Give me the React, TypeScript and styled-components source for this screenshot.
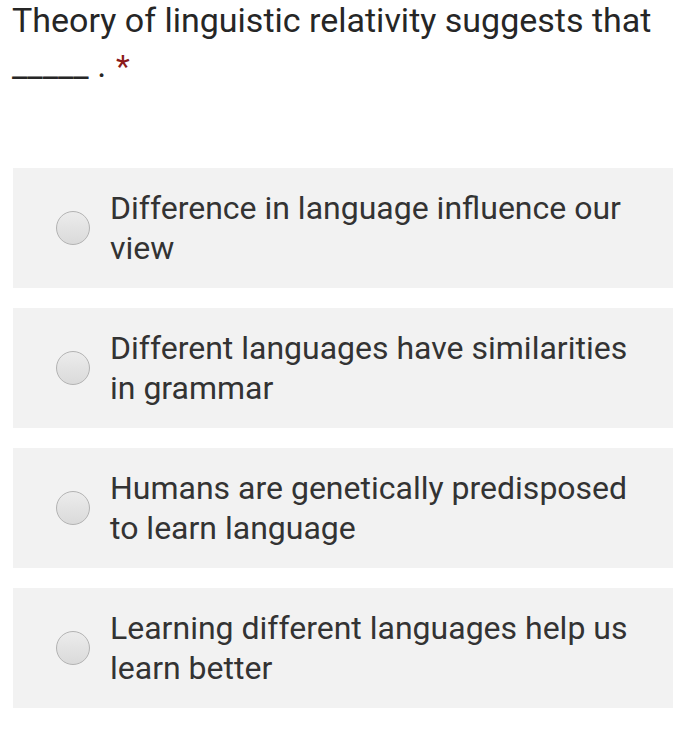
import React from "react";
import styled, { createGlobalStyle } from "styled-components";

const Global = createGlobalStyle`
  html, body { margin: 0; padding: 0; background: #ffffff; }
  body { font-family: Roboto, "Noto Sans", sans-serif; }
`;

const Page = styled.div`
  width: 693px;
  padding: 0 20px 0 12px;
  box-sizing: border-box;
`;

const Title = styled.div`
  font-size: 34px;
  line-height: 45px;
  color: #262626;
  margin-top: -2px;
  margin-bottom: 80px;
`;

const Required = styled.span`
  color: #8b1a1a;
  font-size: 32px;
  line-height: 0;
  margin-left: 10px;
  vertical-align: 0;
`;

const Options = styled.div`
  display: flex;
  flex-direction: column;
  gap: 20px;
  margin-left: 1px;
`;

const Option = styled.label`
  display: flex;
  align-items: center;
  min-height: 120px;
  background: #f2f2f2;
  box-sizing: border-box;
  padding: 0 28px 0 43px;
`;

const Radio = styled.span`
  flex: none;
  width: 34px;
  height: 34px;
  border-radius: 50%;
  box-sizing: border-box;
  border: 1px solid #b3b3b3;
  background: linear-gradient(#ececec, #dadada);
  margin-right: 20px;
`;

const Text = styled.span`
  font-size: 32px;
  line-height: 40px;
  color: #333333;
`;

const options = [
  "Difference in language influence our view",
  "Different languages have similarities in grammar",
  "Humans are genetically predisposed to learn language",
  "Learning different languages help us learn better",
];

export default function App() {
  return (
    <>
      <Global />
      <Page>
        <Title>
          Theory of linguistic relativity suggests that
          <br />
          _____ .<Required>*</Required>
        </Title>
        <Options>
          {options.map((o) => (
            <Option key={o}>
              <Radio />
              <Text>{o}</Text>
            </Option>
          ))}
        </Options>
      </Page>
    </>
  );
}
